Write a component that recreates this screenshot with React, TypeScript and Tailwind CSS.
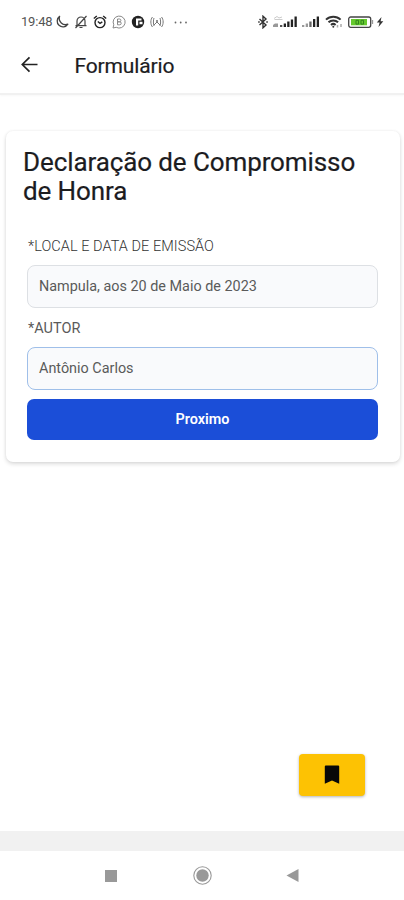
import React from 'react';

const fields = [
  {
    label: '*LOCAL E DATA DE EMISSÃO',
    value: 'Nampula, aos 20 de Maio de 2023',
    border: 'border-[#dde0e4]',
    labelStyle: 'tracking-[0.05px] font-light text-[#333]',
  },
  {
    label: '*AUTOR',
    value: 'Antônio Carlos',
    border: 'border-[#9fbfe9]',
    labelStyle: 'font-normal text-[#5a5a5a]',
  },
];

const StatusBar: React.FC = () => {
  return (
    <div className="flex h-[38px] items-start justify-between pl-[21px] pr-[20px] pt-[14px] text-[#444]">
      <div className="flex h-4 items-center">
        <span className="w-[34px] whitespace-nowrap text-[13px] leading-4 tracking-[-0.2px] text-[#555]">19:48</span>
        <svg className="h-[14px] w-[14px]" viewBox="0 0 14 14" fill="none" stroke="currentColor" strokeWidth="1.3" strokeLinejoin="round">
          <path d="M4.600 1.400A5.800 5.800 0 1 0 12.900 9.200 6.300 6.300 0 0 1 4.600 1.400z" />
        </svg>
        <svg className="ml-[5px] h-[14px] w-[14px]" viewBox="0 0 14 14" fill="none" stroke="currentColor" strokeWidth="1.2">
          <path d="M3 10.500V6a4 4 0 0 1 8 0v4.500M1.500 10.700h11M5.500 12.500h3M12.500 1L1.500 13" />
        </svg>
        <svg className="ml-[5px] h-[14px] w-[14px]" viewBox="0 0 14 14" fill="none" stroke="#222" strokeWidth="1.4">
          <circle cx="7" cy="7.600" r="5" />
          <path d="M.8 3.500L3.800 1M13.200 3.500L10.200 1M4.800 6.500L7 8.300l2.300-1.500" />
        </svg>
        <svg className="ml-[5px] h-[14px] w-[14px]" viewBox="0 0 14 14" fill="none" stroke="#888" strokeWidth="1">
          <path d="M1 13l.8-3.200A6 6 0 1 1 4.200 12.300z" />
          <path d="M5.500 4h2a1.400 1.400 0 0 1 0 2.800H6h1.700a1.500 1.500 0 0 1 0 3H5.500z" />
        </svg>
        <svg className="ml-[5px] h-[14px] w-[14px]" viewBox="0 0 14 14">
          <circle cx="7" cy="7" r="6.200" fill="#222" />
          <path d="M5 3.500h5.500v2H7.200v5H5zM8.500 6.800h3v2.500h-3z" fill="#fff" />
        </svg>
        <svg className="ml-[5px] h-[14px] w-[14px]" viewBox="0 0 14 14" fill="none" stroke="#777" strokeWidth="1">
          <path d="M2.500 2C.3 4.500.3 9.500 2.500 12M11.500 2c2.200 2.500 2.200 7.500 0 10M4 3c-.8 2-.8 6 0 8M10 3c.8 2 .8 6 0 8M4 10L7 7l3 3" />
          <circle cx="7" cy="6" r="1.100" fill="#777" stroke="none" />
        </svg>
        <svg className="ml-[10px] h-[14px] w-[14px]" viewBox="0 0 14 14" fill="#666">
          <circle cx="1.500" cy="7.500" r=".9" />
          <circle cx="6.700" cy="7.500" r=".9" />
          <circle cx="12" cy="7.500" r=".9" />
        </svg>
      </div>
      <div className="flex h-4 items-center">
        <svg className="mr-[2px] h-[14px] w-[10px]" viewBox="0 0 10 14" fill="none" stroke="#333" strokeWidth="1.400">
          <path d="M1.500 4L8 10 5 12.800V1.200L8 4 1.500 10" />
          <path d="M.2 7h1.500M8.300 7h1.500" />
        </svg>
        <svg className="ml-[3px] h-[14px] w-[25px]" viewBox="0 0 25 14">
          <path d="M1 3.500l3-2 2 1.500 3-1M1.500 4.500h8" fill="none" stroke="#ccc" />
          <path d="M0 10l2-1.500h3V12H0z" fill="#999" />
          <path d="M7 10h2.300v2H7z" fill="#555" />
          <path d="M10.700 8.500H13V12h-2.300zM14.200 6.500h2.300V12h-2.300zM17.800 4.500h2.300V12h-2.300zM21.500 1.500h2.300V12h-2.300z" fill="#222" />
        </svg>
        <svg className="ml-[4px] h-[14px] w-[18px]" viewBox="0 0 18 14">
          <path d="M0 10h2.300v2H0zM3.700 8.500H6V12H3.700z" fill="#999" />
          <path d="M7.300 6.500h2.300V12H7.300z" fill="#666" />
          <path d="M11 4h2.300v8H11zM14.700 1.500H17V12h-2.300z" fill="#222" />
        </svg>
        <svg className="ml-[5px] h-[14px] w-[19px]" viewBox="0 0 19 14" fill="none" stroke="#333" strokeWidth="2">
          <path d="M1 4.600a10.500 10.500 0 0 1 14.600 0M3.500 7.300a7 7 0 0 1 9.600 0M6 9.900a3.500 3.500 0 0 1 4.600 0" />
          <circle cx="8.300" cy="11.700" r="1" fill="#333" stroke="none" />
          <path d="M12.500 12.500V10M16 9v3" stroke="#aaa" strokeWidth="1.500" />
        </svg>
        <svg className="ml-[4px] h-[14px] w-[27px]" viewBox="0 0 27 14">
          <rect x=".7" y="2" width="22" height="10.300" rx="2" fill="#fff" stroke="#444" strokeWidth="1.300" />
          <rect x="3" y="4" width="16" height="6.300" fill="#65c92d" />
          <path d="M8 5.300h2.500v3.800H8zM13 5.300h2.500v3.800H13z" fill="none" stroke="#31851c" />
          <path d="M24.500 5v4" stroke="#999" strokeWidth="1.300" />
        </svg>
        <svg className="ml-[1px] h-[14px] w-[8px]" viewBox="0 0 8 14" fill="#333">
          <path d="M5.500 2L.8 7.600h2.800L2.500 12 7.300 6.200H4.600z" />
        </svg>
      </div>
    </div>
  );
};

const Header: React.FC = () => {
  return (
    <header className="flex h-[57px] items-center border-b-2 border-[#f1f1f1] pl-[20px] shadow-[0_1px_2px_rgba(0,0,0,0.03)]">
      <svg className="h-[20px] w-[20px] text-[#222]" viewBox="0 0 20 20" fill="none" stroke="currentColor" strokeWidth="1.700">
        <path d="M17.500 8.500H2.500M9.500 1.300L2.300 8.500l7.200 7.200" />
      </svg>
      <h1 className="ml-[34.5px] text-[21px] font-normal leading-6 tracking-[-0.15px] text-[#1c1c1f] [-webkit-text-stroke:0.2px_#1c1c1f]">
        Formulário
      </h1>
    </header>
  );
};

const App: React.FC = () => {
  return (
    <div className="flex h-[900px] w-[404px] flex-col overflow-hidden bg-white font-[Roboto,sans-serif]">
      <StatusBar />
      <Header />

      <main className="flex flex-1 flex-col pl-[6px] pr-[4px] pt-[36px]">
        <div className="h-[331px] rounded-[7px] bg-white pl-[21px] pr-[22px] pt-[17px] shadow-[0_2px_4px_rgba(0,0,0,0.14),0_0_3px_rgba(0,0,0,0.06)]">
          <h2 className="-ml-1 whitespace-nowrap text-[26px] font-normal leading-[29px] tracking-[-0.1px] text-[#1c1c1f] [-webkit-text-stroke:0.2px_#1c1c1f]">
            Declaração de Compromisso
            <br />
            de Honra
          </h2>
          <form className="mt-[29px]">
            {fields.map((field) => (
              <div key={field.label} className="mb-[9px]">
                <label className={`ml-px block h-[30px] pt-[3px] text-[14.5px] leading-[18px] ${field.labelStyle}`}>
                  {field.label}
                </label>
                <div className={`flex h-[43px] items-center rounded-[8px] border bg-[#f9fafc] px-[11px] text-[14.4px] text-[#5a5a5a] ${field.border}`}>
                  {field.value}
                </div>
              </div>
            ))}
            <button type="button" className="block h-[41px] w-full rounded-[7px] bg-[#1b4ed8] text-[14.4px] font-semibold text-white">
              Proximo
            </button>
          </form>
        </div>

        <button type="button" className="mb-[35px] mr-[35px] mt-auto flex h-[42px] w-[66px] items-center justify-center self-end rounded-[4px] bg-[#fdc203] shadow-[0_1px_3px_rgba(0,0,0,0.3)]">
          <svg className="h-[20px] w-[16px]" viewBox="0 0 16 20">
            <path d="M1.800.500h12.400a1 1 0 0 1 1 1v17.200L8 15.500.800 18.700V1.500a1 1 0 0 1 1-1z" fill="#080808" />
          </svg>
        </button>
      </main>

      <div className="h-[20px] bg-[#f1f1f1]" />
      <nav className="flex h-[49px] items-center justify-between pl-[105px] pr-[105px]">
        <div className="h-[12px] w-[12px] bg-[#999]" />
        <svg className="h-[20px] w-[20px]" viewBox="0 0 20 20">
          <circle cx="10.500" cy="9.500" r="8.700" fill="#fff" stroke="#999" strokeWidth="1.100" />
          <circle cx="10.500" cy="9.500" r="6.200" fill="#999" />
        </svg>
        <svg className="h-[14px] w-[13px]" viewBox="0 0 13 14">
          <path d="M12.500 0v13L.500 6.500z" fill="#999" />
        </svg>
      </nav>
    </div>
  );
};

export default App;
